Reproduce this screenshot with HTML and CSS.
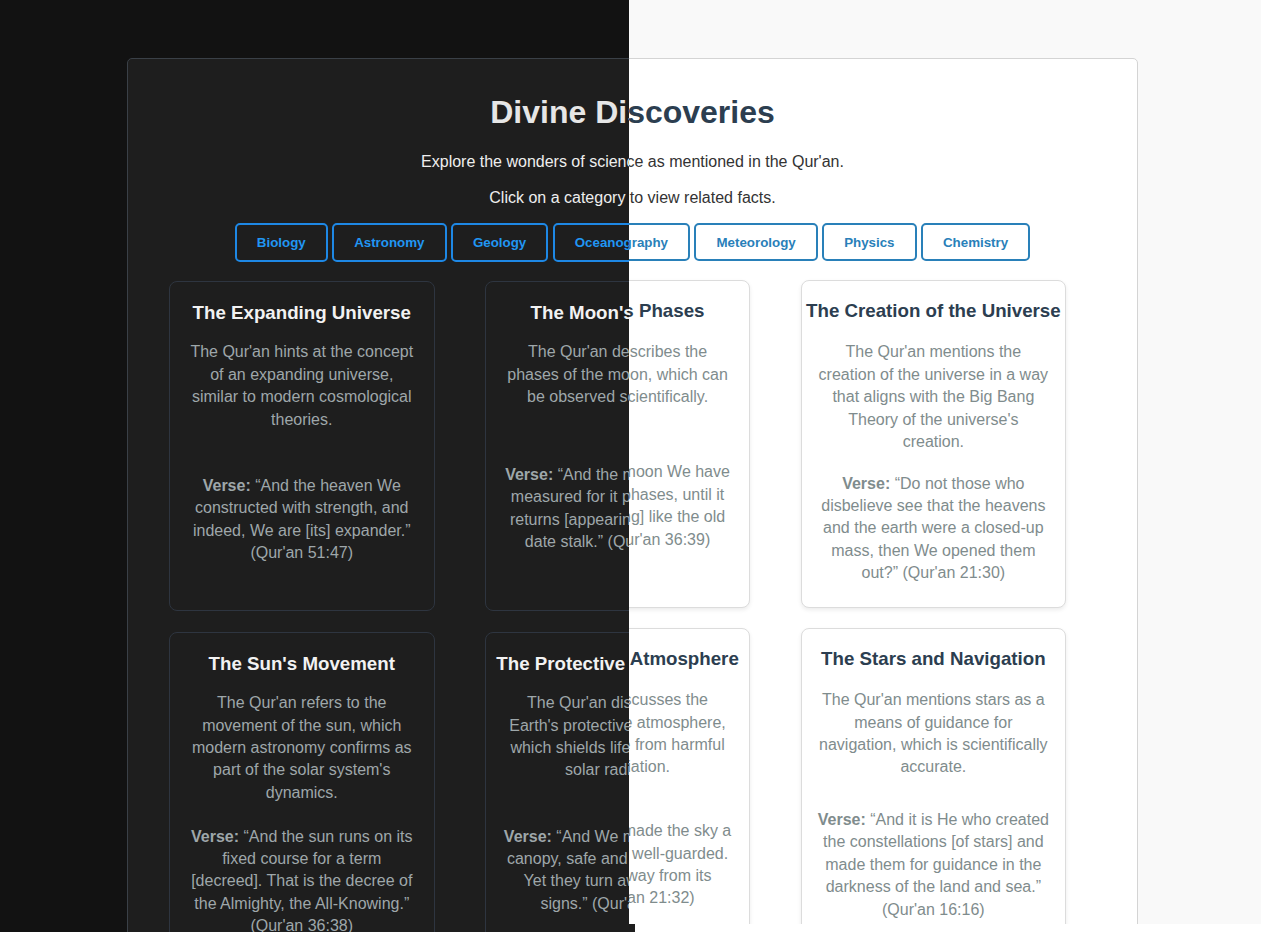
FILE: index.html
```html
<!DOCTYPE html>
<html lang="en">
<head>
<meta charset="utf-8">
<title>Divine Discoveries</title>
<link rel="stylesheet" href="styles.css">
</head>
<body>
<div class="stage">

  <div class="theme theme-light">
    <div class="page">
      <div class="container">
        <h1 class="title">Divine Discoveries</h1>
        <p class="intro">Explore the wonders of science as mentioned in the Qur'an.</p>
        <p class="intro">Click on a category to view related facts.</p>
        <div class="categories">
          <button class="cat-btn">Biology</button>
          <button class="cat-btn">Astronomy</button>
          <button class="cat-btn">Geology</button>
          <button class="cat-btn">Oceanography</button>
          <button class="cat-btn">Meteorology</button>
          <button class="cat-btn">Physics</button>
          <button class="cat-btn">Chemistry</button>
        </div>
        <div class="grid">
          <div class="card">
            <h3>The Expanding Universe</h3>
            <p class="desc">The Qur'an hints at the concept of an expanding universe, similar to modern cosmological theories.</p>
            <p class="verse"><strong>Verse:</strong> “And the heaven We constructed with strength, and indeed, We are [its] expander.” (Qur'an 51:47)</p>
          </div>
          <div class="card">
            <h3>The Moon's Phases</h3>
            <p class="desc">The Qur'an describes the phases of the moon, which can be observed scientifically.</p>
            <p class="verse"><strong>Verse:</strong> “And the moon We have measured for it phases, until it returns [appearing] like the old date stalk.” (Qur'an 36:39)</p>
          </div>
          <div class="card">
            <h3>The Creation of the Universe</h3>
            <p class="desc">The Qur'an mentions the creation of the universe in a way that aligns with the Big Bang Theory of the universe's creation.</p>
            <p class="verse"><strong>Verse:</strong> “Do not those who disbelieve see that the heavens and the earth were a closed-up mass, then We opened them out?” (Qur'an 21:30)</p>
          </div>
          <div class="card">
            <h3>The Sun's Movement</h3>
            <p class="desc">The Qur'an refers to the movement of the sun, which modern astronomy confirms as part of the solar system's dynamics.</p>
            <p class="verse"><strong>Verse:</strong> “And the sun runs on its fixed course for a term [decreed]. That is the decree of the Almighty, the All-Knowing.” (Qur'an 36:38)</p>
          </div>
          <div class="card">
            <h3>The Protective Atmosphere</h3>
            <p class="desc">The Qur'an discusses the Earth's protective atmosphere, which shields life from harmful solar radiation.</p>
            <p class="verse"><strong>Verse:</strong> “And We made the sky a canopy, safe and well-guarded. Yet they turn away from its signs.” (Qur'an 21:32)</p>
          </div>
          <div class="card">
            <h3>The Stars and Navigation</h3>
            <p class="desc">The Qur'an mentions stars as a means of guidance for navigation, which is scientifically accurate.</p>
            <p class="verse"><strong>Verse:</strong> “And it is He who created the constellations [of stars] and made them for guidance in the darkness of the land and sea.” (Qur'an 16:16)</p>
          </div>
        </div>
      </div>
    </div>
  </div>

  <div class="theme theme-dark">
    <div class="page">
      <div class="container">
        <h1 class="title">Divine Discoveries</h1>
        <p class="intro">Explore the wonders of science as mentioned in the Qur'an.</p>
        <p class="intro">Click on a category to view related facts.</p>
        <div class="categories">
          <button class="cat-btn">Biology</button>
          <button class="cat-btn">Astronomy</button>
          <button class="cat-btn">Geology</button>
          <button class="cat-btn">Oceanography</button>
          <button class="cat-btn">Meteorology</button>
          <button class="cat-btn">Physics</button>
          <button class="cat-btn">Chemistry</button>
        </div>
        <div class="grid">
          <div class="card">
            <h3>The Expanding Universe</h3>
            <p class="desc">The Qur'an hints at the concept of an expanding universe, similar to modern cosmological theories.</p>
            <p class="verse"><strong>Verse:</strong> “And the heaven We constructed with strength, and indeed, We are [its] expander.” (Qur'an 51:47)</p>
          </div>
          <div class="card">
            <h3>The Moon's Phases</h3>
            <p class="desc">The Qur'an describes the phases of the moon, which can be observed scientifically.</p>
            <p class="verse"><strong>Verse:</strong> “And the moon We have measured for it phases, until it returns [appearing] like the old date stalk.” (Qur'an 36:39)</p>
          </div>
          <div class="card">
            <h3>The Creation of the Universe</h3>
            <p class="desc">The Qur'an mentions the creation of the universe in a way that aligns with the Big Bang Theory of the universe's creation.</p>
            <p class="verse"><strong>Verse:</strong> “Do not those who disbelieve see that the heavens and the earth were a closed-up mass, then We opened them out?” (Qur'an 21:30)</p>
          </div>
          <div class="card">
            <h3>The Sun's Movement</h3>
            <p class="desc">The Qur'an refers to the movement of the sun, which modern astronomy confirms as part of the solar system's dynamics.</p>
            <p class="verse"><strong>Verse:</strong> “And the sun runs on its fixed course for a term [decreed]. That is the decree of the Almighty, the All-Knowing.” (Qur'an 36:38)</p>
          </div>
          <div class="card">
            <h3>The Protective Atmosphere</h3>
            <p class="desc">The Qur'an discusses the Earth's protective atmosphere, which shields life from harmful solar radiation.</p>
            <p class="verse"><strong>Verse:</strong> “And We made the sky a canopy, safe and well-guarded. Yet they turn away from its signs.” (Qur'an 21:32)</p>
          </div>
          <div class="card">
            <h3>The Stars and Navigation</h3>
            <p class="desc">The Qur'an mentions stars as a means of guidance for navigation, which is scientifically accurate.</p>
            <p class="verse"><strong>Verse:</strong> “And it is He who created the constellations [of stars] and made them for guidance in the darkness of the land and sea.” (Qur'an 16:16)</p>
          </div>
        </div>
      </div>
    </div>
  </div>

</div>
</body>
</html>
```
FILE: styles.css
```css
* {
  box-sizing: border-box;
}

html,
body {
  margin: 0;
  padding: 0;
  overflow: hidden;
}

body {
  font-family: "Liberation Sans", Arial, sans-serif;
  background: #ffffff;
}

.stage {
  position: relative;
  width: 1261px;
  height: 932px;
  overflow: hidden;
  background: #ffffff;
}

.theme {
  width: 1261px;
  overflow: hidden;
}

.page {
  padding-top: 58px;
}

.container {
  width: 1011px;
  margin-left: 127px;
  border: 1px solid #d6d6d6;
  border-radius: 5px;
  padding: 13.5px 0 40px;
}

.title {
  margin: 21.44px 0;
  font-size: 32px;
  font-weight: bold;
  text-align: center;
}

.intro {
  margin: 16px 0;
  font-size: 16px;
  line-height: 19.5px;
  text-align: center;
}

.categories {
  display: flex;
  justify-content: center;
  gap: 4.45px;
  margin: 0 0 19px;
}

.cat-btn {
  font-family: "Liberation Sans", Arial, sans-serif;
  font-size: 13.33px;
  font-weight: bold;
  line-height: 15px;
  padding: 9.5px 20px;
  border: 2px solid #2980b9;
  border-radius: 5px;
  background: #ffffff;
  color: #2980b9;
}

.grid {
  display: grid;
  grid-template-columns: repeat(3, 265.5px);
  column-gap: 50.3px;
  row-gap: 20px;
  padding-left: 41px;
}

.card {
  display: flex;
  flex-direction: column;
  border: 1px solid #dddddd;
  border-radius: 8px;
  padding: 0 0 22.5px;
  text-align: center;
}

.card h3 {
  margin: 18.5px 0 19.6px;
  font-size: 18.72px;
  font-weight: bold;
}

.card p {
  width: 233px;
  margin: 0 auto;
  font-size: 16px;
  line-height: 22.4px;
}

.card .desc {
  margin-bottom: 19px;
}

.card .verse {
  margin: auto;
}

/* ---------- light theme ---------- */
.theme-light {
  height: 924px;
  background: #f9f9f9;
}

.theme-light .container {
  background: #ffffff;
  border-color: #d4d4d4;
}

.theme-light .title {
  color: #2c3e50;
}

.theme-light .intro {
  color: #333333;
}

.theme-light .card {
  background: #ffffff;
  border-color: #dcdcdc;
  box-shadow: 0 2px 4px rgba(0, 0, 0, 0.08);
}

.theme-light .card h3 {
  color: #2c3e50;
}

.theme-light .card p {
  color: #7f8c8d;
}

/* ---------- dark theme (overlay on left side) ---------- */
.theme-dark {
  position: absolute;
  top: 0;
  left: 0;
  height: 932px;
  background: #121212;
  clip-path: polygon(0 0, 629px 0, 629px 924px, 635px 924px, 635px 100%, 0 100%);
}

.theme-dark .container {
  background: #1e1e1e;
  border-color: #3a4047;
}

.theme-dark .title {
  color: #e6e6e6;
}

.theme-dark .intro {
  color: #eeeeee;
}

.theme-dark .cat-btn {
  padding: 10px 20px;
  background: transparent;
  border-color: #1e88e5;
  color: #2196f3;
}

.theme-dark .grid {
  row-gap: 21.5px;
}

.theme-dark .card {
  background: #1e1e1e;
  border-color: #2e3540;
}

.theme-dark .card h3 {
  margin: 19.8px 0 17.3px;
  color: #f2f2f2;
}

.theme-dark .card .desc {
  margin-bottom: 21.5px;
}

.theme-dark .card p {
  color: #9ea7aa;
}
```
